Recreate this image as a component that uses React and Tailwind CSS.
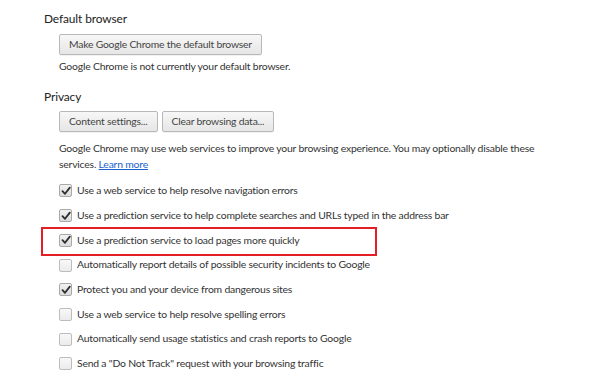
import React from "react";

const font = { fontFamily: 'Lato, "Open Sans", sans-serif' };

function Btn({ children }) {
  return (
    <button className="h-[21px] px-[9px] border border-[#b8b8b8] rounded-[2px] bg-gradient-to-b from-[#f7f7f7] to-[#e6e6e6] text-[10.35px] tracking-[-0.2px] text-[#444] leading-[19px] shadow-[0_1px_0_rgba(0,0,0,0.05)]">
      {children}
    </button>
  );
}

function Check({ checked }) {
  return (
    <span
      className={
        "w-[13px] h-[13px] rounded-[2px] border flex items-center justify-center shrink-0 " +
        (checked
          ? "border-[#a9a9a9] bg-gradient-to-b from-[#f2f2f2] to-[#dcdcdc]"
          : "border-[#bdbdbd] bg-gradient-to-b from-[#f8f8f8] to-[#ebebeb]")
      }
    >
      {checked && (
        <svg width="10" height="10" viewBox="0 0 10 10">
          <path d="M1.5 5.2 L4 7.8 L8.8 1.6" fill="none" stroke="#2e2e2e" strokeWidth="1.8" strokeLinecap="round" strokeLinejoin="round" />
        </svg>
      )}
    </span>
  );
}

const rows = [
  [true, "Use a web service to help resolve navigation errors"],
  [true, "Use a prediction service to help complete searches and URLs typed in the address bar"],
  [true, "Use a prediction service to load pages more quickly", true],
  [false, "Automatically report details of possible security incidents to Google"],
  [true, "Protect you and your device from dangerous sites"],
  [false, "Use a web service to help resolve spelling errors"],
  [false, "Automatically send usage statistics and crash reports to Google"],
  [false, 'Send a "Do Not Track" request with your browsing traffic'],
];

export default function App() {
  return (
    <div className="w-[600px] h-[384px] bg-white overflow-hidden pl-[44px] pt-[9px] text-[#333] text-[10.4px] tracking-[-0.2px]" style={font}>
      <div className="text-[11.9px] tracking-[-0.1px] leading-[20px] text-[#222]">Default browser</div>
      <div className="pl-[15px]">
        <div className="mt-[5px] flex">
          <Btn>Make Google Chrome the default browser</Btn>
        </div>
        <div className="mt-[3px] leading-[16px]">Google Chrome is not currently your default browser.</div>
      </div>
      <div className="mt-[13px] text-[11.9px] tracking-[-0.1px] leading-[20px] text-[#222]">Privacy</div>
      <div className="pl-[15px]">
        <div className="mt-[4px] flex gap-[4px]">
          <Btn>Content settings...</Btn>
          <Btn>Clear browsing data...</Btn>
        </div>
        <p className="mt-[8px] whitespace-nowrap leading-[16px]">
          Google Chrome may use web services to improve your browsing experience. You may optionally disable these
          <br />
          services. <span className="text-[#1a5fd0] underline">Learn more</span>
        </p>
        <div className="mt-[6.6px]">
          {rows.map(([c, t, hl], i) => (
            <div key={i} className="relative h-[24.7px] flex items-center gap-[5px]">
              <Check checked={c} />
              <span>{t}</span>
              {hl && (
                <div className="absolute left-[-18px] top-[-1px] w-[336px] h-[29px] border-2 border-[#e31e24]" />
              )}
            </div>
          ))}
        </div>
      </div>
    </div>
  );
}
